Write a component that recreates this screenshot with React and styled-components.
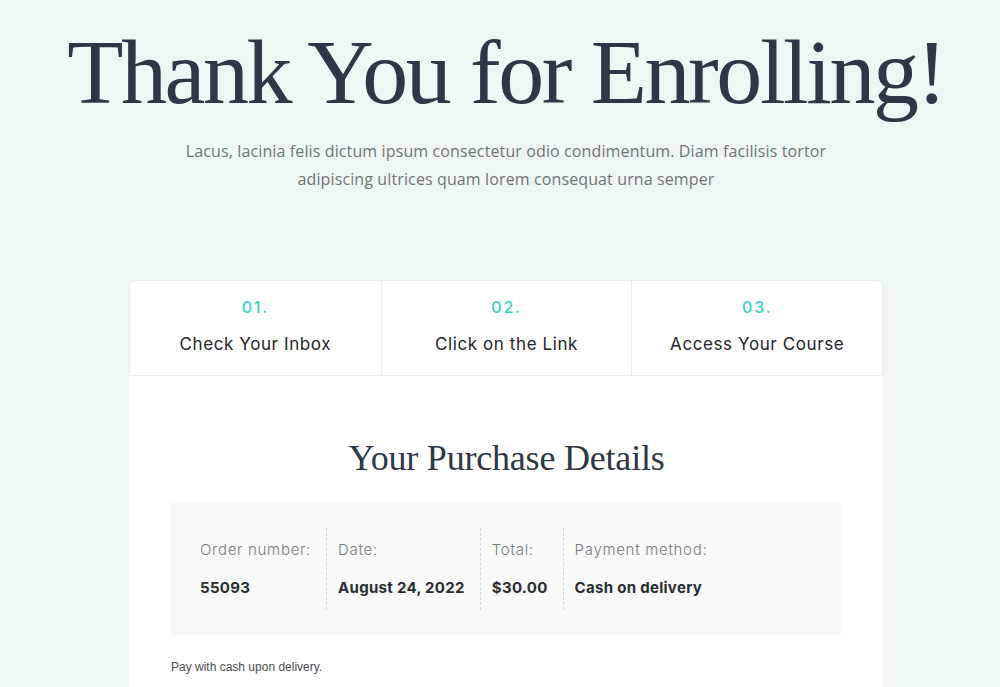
import React from "react";
import styled, { createGlobalStyle } from "styled-components";

const Global = createGlobalStyle`
  html, body { margin: 0; padding: 0; background: #eff7f4; }
  * { box-sizing: border-box; }
`;

const Page = styled.div`
  min-height: 687px;
  background: #eff7f4;
  padding: 22px 0 0 12px;
  display: flex;
  flex-direction: column;
  align-items: center;
  overflow: hidden;
`;

const Title = styled.h1`
  margin: 0;
  font-family: "Liberation Serif", "DejaVu Serif", serif;
  font-weight: 400;
  font-size: 92px;
  line-height: 100px;
  letter-spacing: -2.4px;
  color: #2e3746;
  white-space: nowrap;
`;

const Lead = styled.p`
  margin: 15px 0 0;
  width: 680px;
  text-align: center;
  font-family: "Open Sans", Lato, sans-serif;
  font-weight: 400;
  font-size: 16px;
  line-height: 28px;
  letter-spacing: 0.12px;
  color: #6f7478;
`;

const Card = styled.section`
  margin-top: 87px;
  width: 754px;
  background: #fff;
  border-radius: 6px 6px 0 0;
`;

const Steps = styled.div`
  display: grid;
  grid-template-columns: repeat(3, 1fr);
  border: 1px solid #ebeeed;
  border-radius: 6px 6px 0 0;
`;

const Step = styled.div`
  height: 94px;
  display: flex;
  flex-direction: column;
  align-items: center;
  padding-top: 15px;
  border-left: ${(p) => (p.$first ? "none" : "1px solid #ebeeed")};
  font-family: Inter, "Noto Sans", sans-serif;
`;

const StepNum = styled.div`
  font-size: 16px;
  line-height: 22px;
  font-weight: 500;
  letter-spacing: 1.8px;
  color: #33d6bc;
`;

const StepLabel = styled.div`
  margin-top: 15px;
  font-size: 17px;
  line-height: 22px;
  font-weight: 400;
  color: #23262b;
  letter-spacing: 0.6px;
`;

const Body = styled.div`
  padding: 60px 41px 20px 42px;
`;

const Heading = styled.h2`
  margin: 0;
  text-align: center;
  font-family: "Liberation Serif", "DejaVu Serif", serif;
  font-weight: 400;
  font-size: 36px;
  line-height: 44px;
  letter-spacing: -0.2px;
  color: #2e3746;
`;

const OrderBox = styled.div`
  margin-top: 22px;
  background: #f6faf9;
  padding: 26px 29px 25px;
  display: flex;
`;

const Item = styled.div`
  display: flex;
  flex-direction: column;
  padding: 0 15px 0 11px;
  border-left: 1px dashed #d4d8d7;
  height: 82px;
  justify-content: center;
  gap: 16px;
  font-family: Inter, "Noto Sans", sans-serif;
  &:first-child { border-left: none; padding-left: 0; }
`;

const Label = styled.div`
  font-size: 15px;
  line-height: 22px;
  font-weight: 300;
  letter-spacing: 0.7px;
  color: #787c80;
  white-space: nowrap;
`;

const Value = styled.div`
  font-size: 15px;
  line-height: 22px;
  font-weight: 700;
  letter-spacing: 0.3px;
  color: #2a2d31;
  white-space: nowrap;
`;

const Note = styled.p`
  margin: 24px 0 0;
  font-family: "Liberation Sans", Arial, sans-serif;
  font-size: 12px;
  line-height: 16px;
  color: #4a4d52;
`;

const steps = [
  ["01.", "Check Your Inbox"],
  ["02.", "Click on the Link"],
  ["03.", "Access Your Course"],
];

const order = [
  ["Order number:", "55093"],
  ["Date:", "August 24, 2022"],
  ["Total:", "$30.00"],
  ["Payment method:", "Cash on delivery"],
];

export default function App() {
  return (
    <>
      <Global />
      <Page>
        <Title>Thank You for Enrolling!</Title>
        <Lead>
          Lacus, lacinia felis dictum ipsum consectetur odio condimentum. Diam
          facilisis tortor
          <br />
          adipiscing ultrices quam lorem consequat urna semper
        </Lead>
        <Card>
          <Steps>
            {steps.map(([n, l], i) => (
              <Step key={n} $first={i === 0}>
                <StepNum>{n}</StepNum>
                <StepLabel>{l}</StepLabel>
              </Step>
            ))}
          </Steps>
          <Body>
            <Heading>Your Purchase Details</Heading>
            <OrderBox>
              {order.map(([l, v]) => (
                <Item key={l}>
                  <Label>{l}</Label>
                  <Value>{v}</Value>
                </Item>
              ))}
            </OrderBox>
            <Note>Pay with cash upon delivery.</Note>
          </Body>
        </Card>
      </Page>
    </>
  );
}
